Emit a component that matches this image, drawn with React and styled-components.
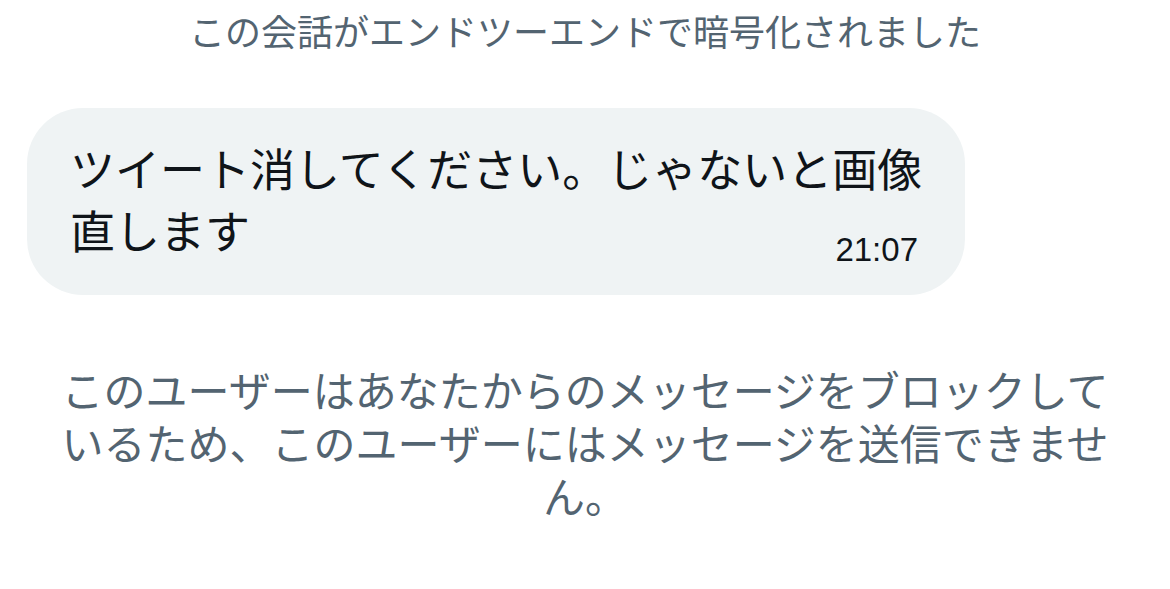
import React from 'react';
import styled, { createGlobalStyle } from 'styled-components';

const GlobalStyle = createGlobalStyle`
  html, body {
    margin: 0;
    padding: 0;
    background: #ffffff;
  }
  body {
    font-family: "Noto Sans CJK JP", "Noto Sans", sans-serif;
  }
`;

const message = {
  text: 'ツイート消してください。じゃないと画像直します',
  time: '21:07',
};

const App = () => (
  <Page>
    <GlobalStyle />
    <Notice>この会話がエンドツーエンドで暗号化されました</Notice>
    <Thread>
      <Bubble>
        <BubbleText>{message.text}</BubbleText>
        <Meta>
          <Time>{message.time}</Time>
        </Meta>
      </Bubble>
    </Thread>
    <Blocked>
      このユーザーはあなたからのメッセージをブロックしているため、このユーザーにはメッセージを送信できません。
    </Blocked>
  </Page>
);

export default App;

const Page = styled.div`
  width: 1170px;
  min-height: 589px;
  display: flex;
  flex-direction: column;
  background: #ffffff;
`;

const Notice = styled.p`
  margin: 0;
  padding-top: 8px;
  font-size: 36px;
  line-height: 44px;
  color: #536471;
  text-align: center;
`;

const Thread = styled.div`
  display: flex;
  padding: 56px 0 0 27px;
`;

const Bubble = styled.div`
  width: 938px;
  box-sizing: border-box;
  padding: 29px 25px 29px 43px;
  background: #eff3f4;
  border-radius: 56px;
  display: flex;
  flex-direction: column;
`;

const BubbleText = styled.p`
  margin: 0;
  font-size: 45px;
  line-height: 62px;
  color: #0f1419;
  word-break: break-all;
`;

const Meta = styled.div`
  display: flex;
  justify-content: flex-end;
  margin-top: -28px;
  padding-right: 22px;
`;

const Time = styled.span`
  font-family: "Liberation Sans", Arial, sans-serif;
  font-size: 33px;
  line-height: 33px;
  color: #0f1419;
`;

const Blocked = styled.p`
  margin: 67px 0 0;
  padding: 0 55px;
  font-size: 42px;
  line-height: 53px;
  color: #536471;
  text-align: center;
  word-break: break-all;
`;
